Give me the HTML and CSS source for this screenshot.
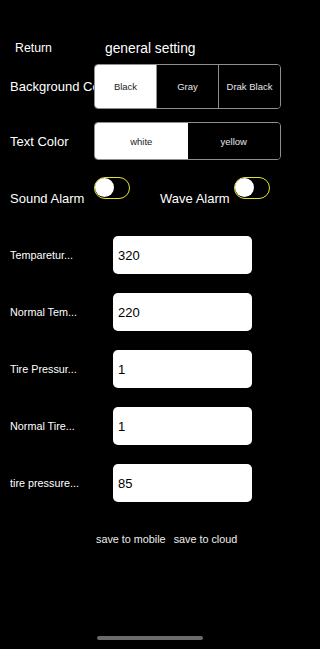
FILE: index.html
```html
<!DOCTYPE html>
<html>
<head>
<meta charset="utf-8">
<link rel="stylesheet" href="styles.css">
</head>
<body>
<div class="screen">
  <div class="header">
    <span class="back">Return</span>
    <span class="title">general setting</span>
  </div>

  <div class="seg-row bg-row">
    <div class="seg-label">Background Co</div>
    <div class="seg seg3">
      <div class="opt on">Black</div>
      <div class="opt">Gray</div>
      <div class="opt">Drak Black</div>
    </div>
  </div>

  <div class="seg-row tc-row">
    <div class="seg-label">Text Color</div>
    <div class="seg seg2">
      <div class="opt on">white</div>
      <div class="opt">yellow</div>
    </div>
  </div>

  <div class="alarm-row">
    <div class="alarm">
      <span class="alarm-label w1">Sound Alarm</span>
      <span class="toggle"><span class="knob"></span></span>
    </div>
    <div class="alarm second">
      <span class="alarm-label w2">Wave Alarm</span>
      <span class="toggle"><span class="knob"></span></span>
    </div>
  </div>

  <div class="fields">
    <div class="field"><span class="f-label">Temparetur...</span><div class="input">320</div></div>
    <div class="field"><span class="f-label">Normal Tem...</span><div class="input">220</div></div>
    <div class="field"><span class="f-label">Tire Pressur...</span><div class="input">1</div></div>
    <div class="field"><span class="f-label">Normal Tire...</span><div class="input">1</div></div>
    <div class="field"><span class="f-label">tire pressure...</span><div class="input">85</div></div>
  </div>

  <div class="saves">
    <span class="save">save to mobile</span>
    <span class="save">save to cloud</span>
  </div>

  <div class="home-bar"></div>
</div>
</body>
</html>
```

FILE: styles.css
```css
html, body {
  margin: 0;
  padding: 0;
  background: #000;
}
body {
  font-family: "Liberation Sans", Arial, sans-serif;
  color: #fff;
  width: 300px;
  height: 649px;
  overflow: hidden;
}
.screen {
  display: flex;
  flex-direction: column;
  height: 649px;
}
.header {
  display: flex;
  align-items: center;
  height: 20px;
  margin-top: 38px;
}
.back {
  font-size: 12.3px;
  margin-left: 15px;
  width: 90px;
}
.title {
  font-size: 13.8px;
}
.seg-row {
  display: flex;
  align-items: center;
}
.bg-row {
  margin-top: 6px;
  height: 45px;
}
.tc-row {
  margin-top: 13px;
  height: 38px;
}
.seg-label {
  width: 84px;
  margin-left: 10px;
  font-size: 13px;
  white-space: nowrap;
  overflow: hidden;
}
.seg {
  display: flex;
  width: 187px;
  height: 100%;
  box-sizing: border-box;
  border: 1px solid #8f8f8f;
  border-radius: 4px;
  overflow: hidden;
}
.opt {
  flex: 1;
  display: flex;
  align-items: center;
  justify-content: center;
  font-size: 9.5px;
  color: #e6e6e6;
  background: #000;
}
.opt + .opt {
  border-left: 1px solid #8f8f8f;
}
.opt.on {
  background: #fff;
  color: #222;
}
.seg2 .opt + .opt {
  border-left: none;
}
.alarm-row {
  display: flex;
  margin-top: 17px;
  height: 29px;
}
.alarm {
  display: flex;
  align-items: flex-start;
}
.alarm-label {
  font-size: 13px;
  margin-left: 10px;
  margin-top: 14px;
  white-space: nowrap;
}
.alarm-label.w1 { width: 84px; }
.alarm.second .alarm-label { margin-left: 30px; width: 74px; }
.toggle {
  display: block;
  width: 36px;
  height: 22px;
  box-sizing: border-box;
  border: 1.5px solid #e4e42c;
  border-radius: 11px;
  padding: 0;
}
.knob {
  display: block;
  width: 19px;
  height: 19px;
  border-radius: 50%;
  background: #fff;
}
.fields {
  display: flex;
  flex-direction: column;
  gap: 19px;
  margin-top: 30px;
}
.field {
  display: flex;
  align-items: center;
  height: 38px;
}
.f-label {
  width: 103px;
  margin-left: 10px;
  font-size: 10.8px;
  white-space: nowrap;
}
.input {
  width: 139px;
  height: 38px;
  box-sizing: border-box;
  background: #fff;
  border-radius: 5px;
  color: #000;
  font-size: 13px;
  display: flex;
  align-items: center;
  padding-left: 5px;
}
.saves {
  display: flex;
  gap: 8px;
  margin-top: 31px;
  margin-left: 96px;
  font-size: 10.8px;
  color: #eee;
}
.home-bar {
  width: 106px;
  height: 4px;
  border-radius: 2px;
  background: #6b6b6b;
  margin: 91px 0 0 97px;
}
```
